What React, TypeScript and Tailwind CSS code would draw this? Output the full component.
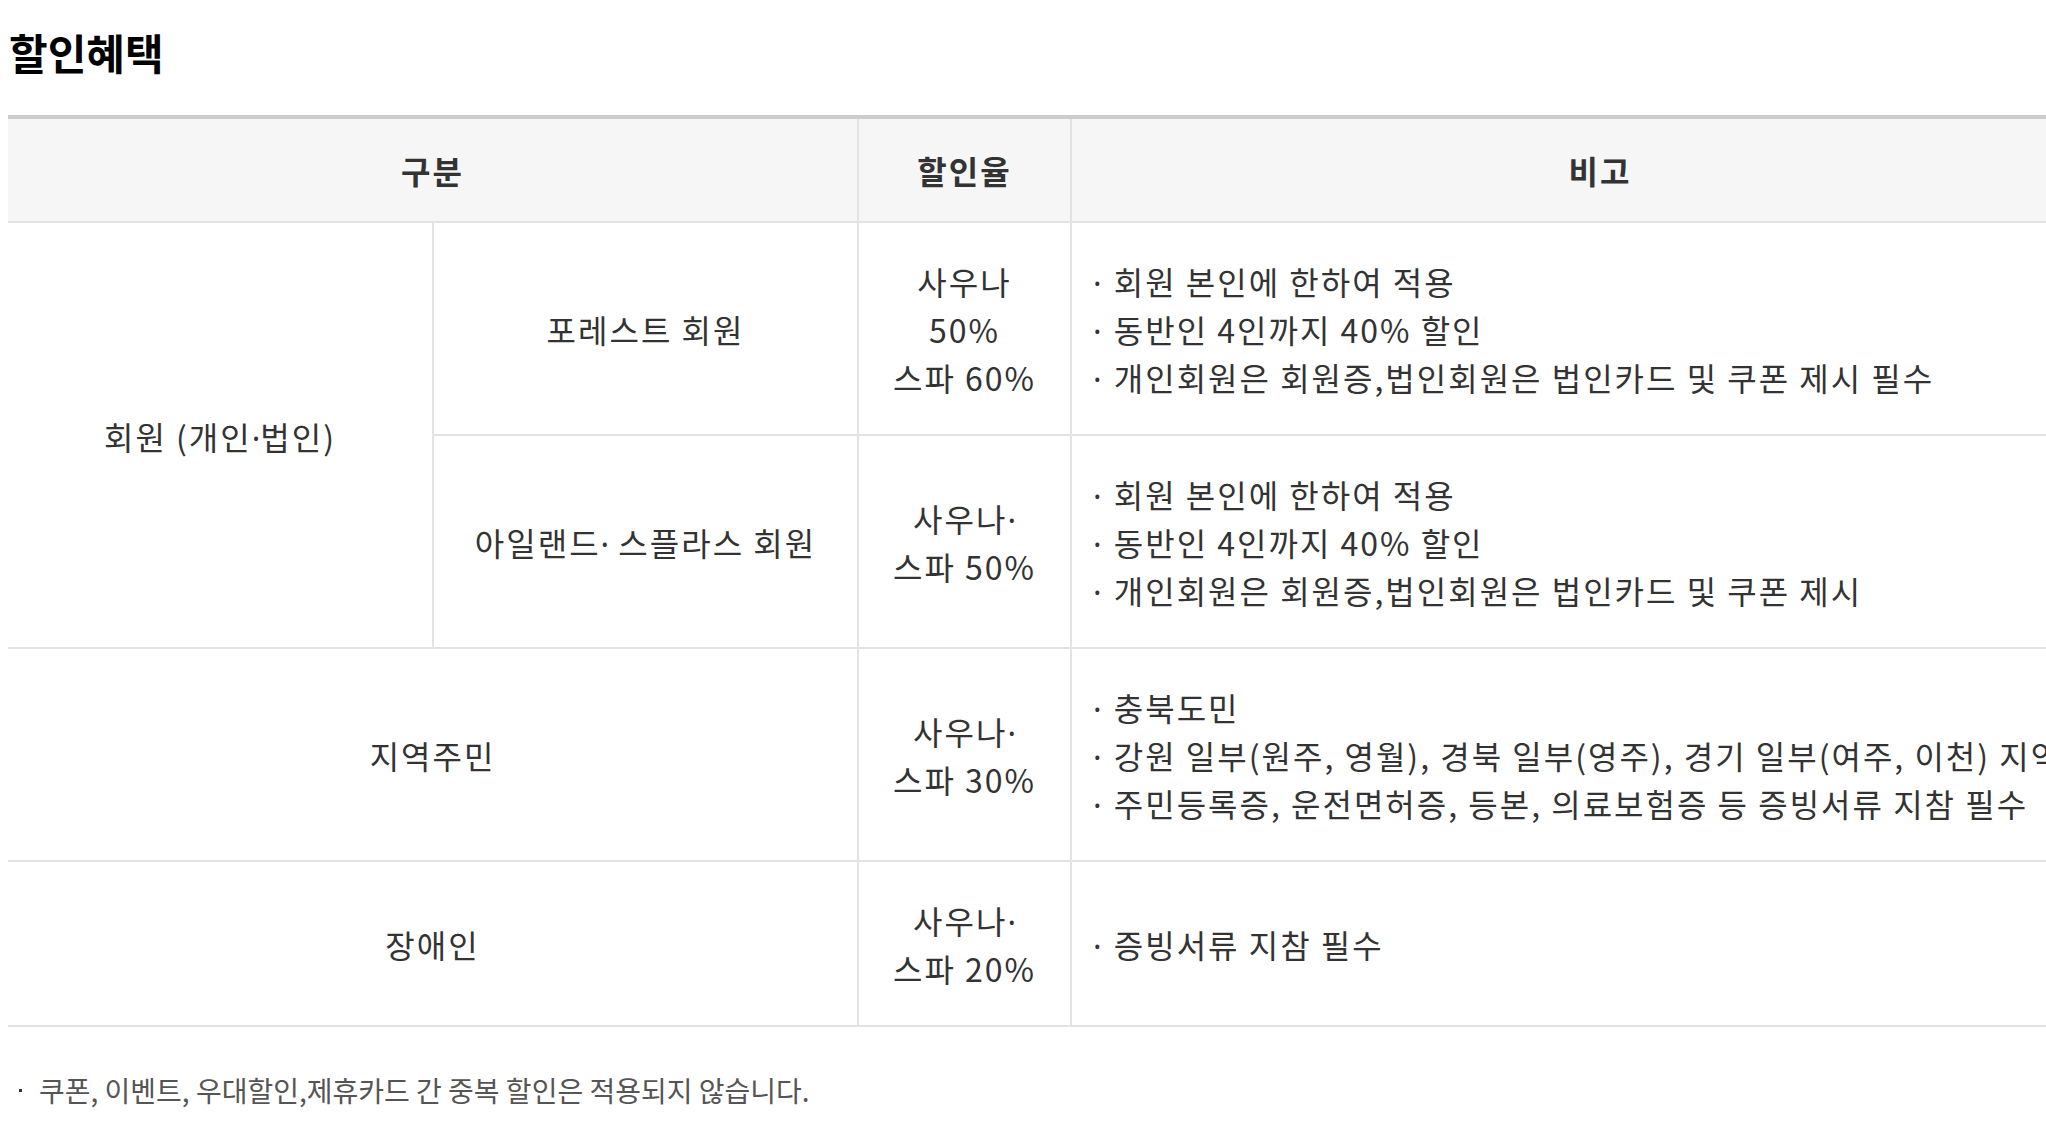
import React from "react";

const D = () => <span className="font-['Noto_Sans',sans-serif] tracking-normal leading-[0]">·</span>;

const Bullets = ({ items }: { items: string[] }) => (
  <div className="flex flex-col">
    {items.map((t, i) => (
      <div key={i} className="whitespace-nowrap h-[48px] -ml-[3px]">
        <D />
        <span className="ml-[3px]"> {t}</span>
      </div>
    ))}
  </div>
);

export default function App() {
  const td = "border-b-2 border-r-2 border-[#e3e3e3] pt-[34px] pb-[33px] text-center align-middle";
  const tdLast = "border-b-2 border-[#e3e3e3] pt-[34px] pb-[33px] pl-[24px] text-left align-middle";
  return (
    <div className="w-[2046px] h-[1128px] overflow-hidden bg-white font-['Noto_Sans_CJK_KR',sans-serif] text-[#333333]">
      <div className="pl-[8px]">
        <h2 className="pt-[22px] text-[42px] leading-[60px] font-bold text-black pl-[1px]">할인혜택</h2>
        <table className="mt-[33px] w-[2120px] table-fixed border-collapse border-t-4 border-t-[#cccccc] text-[32px] leading-[48px] tracking-[2px]">
          <colgroup>
            <col className="w-[425px]" />
            <col className="w-[425px]" />
            <col className="w-[213px]" />
            <col />
          </colgroup>
          <thead>
            <tr className="bg-[#f6f6f6]">
              <th colSpan={2} className="border-b-2 border-r-2 border-[#e3e3e3] py-[27px] font-bold text-center">구분</th>
              <th className="border-b-2 border-r-2 border-[#e3e3e3] py-[27px] font-bold text-center">할인율</th>
              <th className="border-b-2 border-[#e3e3e3] py-[27px] font-bold text-center">비고</th>
            </tr>
          </thead>
          <tbody>
            <tr>
              <td rowSpan={2} className={td}>
                회원 (개인<D />법인)
              </td>
              <td className={td}>포레스트 회원</td>
              <td className={td}>
                사우나
                <br />
                50%
                <br />
                스파 60%
              </td>
              <td className={tdLast}>
                <Bullets
                  items={[
                    "회원 본인에 한하여 적용",
                    "동반인 4인까지 40% 할인",
                    "개인회원은 회원증,법인회원은 법인카드 및 쿠폰 제시 필수",
                  ]}
                />
              </td>
            </tr>
            <tr>
              <td className={td}>
                아일랜드<D /> 스플라스 회원
              </td>
              <td className={td}>
                사우나<D />
                <br />
                스파 50%
              </td>
              <td className={tdLast}>
                <Bullets
                  items={[
                    "회원 본인에 한하여 적용",
                    "동반인 4인까지 40% 할인",
                    "개인회원은 회원증,법인회원은 법인카드 및 쿠폰 제시",
                  ]}
                />
              </td>
            </tr>
            <tr>
              <td colSpan={2} className={td}>지역주민</td>
              <td className={td}>
                사우나<D />
                <br />
                스파 30%
              </td>
              <td className={tdLast}>
                <Bullets
                  items={[
                    "충북도민",
                    "강원 일부(원주, 영월), 경북 일부(영주), 경기 일부(여주, 이천) 지역 주민",
                    "주민등록증, 운전면허증, 등본, 의료보험증 등 증빙서류 지참 필수",
                  ]}
                />
              </td>
            </tr>
            <tr>
              <td colSpan={2} className={td}>장애인</td>
              <td className={td}>
                사우나<D />
                <br />
                스파 20%
              </td>
              <td className={tdLast}>
                <Bullets items={["증빙서류 지참 필수"]} />
              </td>
            </tr>
          </tbody>
        </table>
        <div className="mt-[44px] flex items-center text-[28px] leading-[39px] text-[#555555]">
          <span className="ml-[11px] mr-[17px] inline-block h-[3px] w-[3px] bg-[#333333]" />
          <span>쿠폰, 이벤트, 우대할인,제휴카드 간 중복 할인은 적용되지 않습니다.</span>
        </div>
      </div>
    </div>
  );
}
